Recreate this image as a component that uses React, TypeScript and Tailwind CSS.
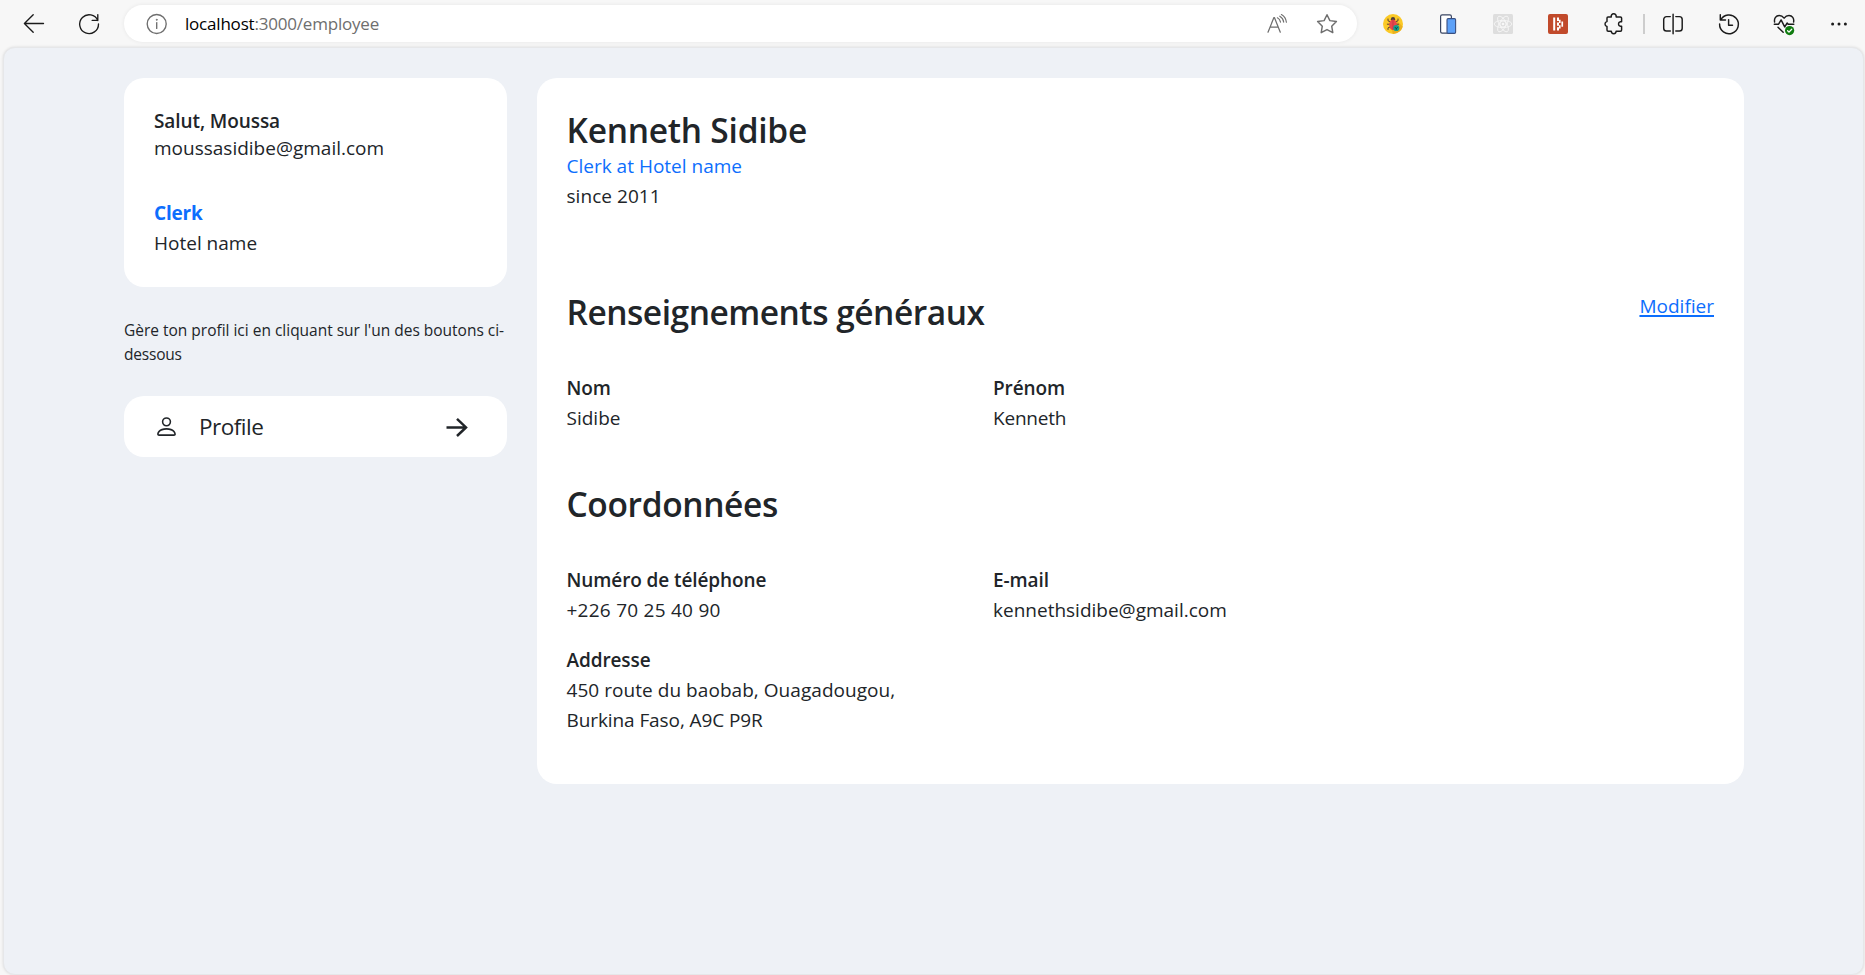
import React from "react";
import { BsPerson } from "react-icons/bs";

const line = {
  fill: "none",
  stroke: "currentColor",
  strokeWidth: 1.35,
  strokeLinecap: "round" as const,
  strokeLinejoin: "round" as const,
};

function Icon({ children, className = "" }: { children: React.ReactNode; className?: string }) {
  return (
    <svg width="24" height="24" viewBox="0 0 24 24" className={`shrink-0 ${className}`} {...line}>
      {children}
    </svg>
  );
}

function BrowserBar() {
  return (
    <header className="flex h-[47px] shrink-0 items-center bg-[#f7f7f7] text-[#1b1b1b]">
      <Icon className="ml-[22px]">
        <path d="M21.5 11.5H2.5M11.2 2.8 2.4 11.5l8.8 8.7" />
      </Icon>
      <Icon className="ml-[31px]">
        <path d="M20.8 8.6A9.4 9.4 0 1 0 21.5 12M20.8 2.6v5.8h-5.6" />
      </Icon>

      <div className="ml-[23px] flex h-[37px] w-[1233px] items-center rounded-full bg-white text-[#6e6e6e] shadow-[0_0_4px_rgba(0,0,0,0.07)]">
        <Icon className="ml-[21px]">
          <circle cx="11.7" cy="12" r="9.5" />
          <path d="M11.7 10.6v5.8" />
          <circle cx="11.7" cy="7.8" r="0.5" fill="currentColor" strokeWidth="0.8" />
        </Icon>
        <div className="ml-[16px] flex-1 whitespace-nowrap text-[17px] leading-[24px] tracking-[-0.2px]">
          <span className="text-black">localhost</span>:3000/employee
        </div>
        <Icon className="mr-[26px]">
          <path d="M3 20.2 8.9 5.6h.5l5.9 14.6M5 15.2h8.3" strokeWidth="1.25" />
          <path d="M12.4 5.8c1.8.9 2.8 2.4 3.1 4.4M14.8 4.2c2.2 1.2 3.5 3.2 3.9 6M16.4 2.6c2.9 1.6 4.6 4.2 5 7.6" strokeWidth="1.15" />
        </Icon>
        <Icon className="mr-[18px]">
          <path d="m12 2.7 2.9 5.9 6.5.95-4.7 4.6 1.1 6.5L12 17.6l-5.8 3.05 1.1-6.5-4.7-4.6 6.5-.95z" strokeWidth="1.45" />
        </Icon>
      </div>

      <svg width="20" height="20" viewBox="0 0 20 20" className="ml-[26px] shrink-0">
        <circle cx="10" cy="10" r="10" fill="#fbc926" />
        <path d="M10 20a10 10 0 0 0 9.7-7.6L13 6 9 16.5z" fill="#eab01e" />
        <g stroke="#5b4034" strokeWidth="1" fill="none" strokeLinecap="round">
          <path d="M7 7.6 5 6.8V5M13 7.6l2-.8V5M6.6 10.2H4.3M13.4 10.2h2.3M7 13l-2 .9v1.6M13 13l2 .9" />
        </g>
        <circle cx="10" cy="5.2" r="2.1" fill="#4b3c3a" />
        <ellipse cx="10" cy="10.7" rx="3.8" ry="5.2" fill="#e8474d" />
        <path d="M10 6v9.6" stroke="#b93440" strokeWidth="0.7" />
        <circle cx="13.3" cy="14" r="3.1" fill="#12a18c" />
        <path d="m12 13.2 1.3 1.5 1.3-1.5M13.3 14.5v1.2" stroke="#133f46" strokeWidth="1" fill="none" />
      </svg>
      <svg width="20" height="20" viewBox="0 0 20 20" className="ml-[35px] shrink-0">
        <rect x="2.6" y="0.8" width="10.8" height="18.4" rx="1.6" fill="#fff" stroke="#3a4562" strokeWidth="1.2" />
        <rect x="9" y="4.6" width="8.6" height="14.8" rx="1.2" fill="#5da1f8" stroke="#3a4f80" strokeWidth="1.1" />
      </svg>
      <svg width="20" height="20" viewBox="0 0 20 20" className="ml-[35px] shrink-0">
        <rect width="20" height="20" rx="1.5" fill="#dedede" />
        <g fill="none" stroke="#f8f8f8" strokeWidth="0.8">
          <circle cx="10" cy="10" r="3" />
          <ellipse cx="10" cy="10" rx="8.8" ry="3.6" />
          <ellipse cx="10" cy="10" rx="8.8" ry="3.6" transform="rotate(60 10 10)" />
          <ellipse cx="10" cy="10" rx="8.8" ry="3.6" transform="rotate(120 10 10)" />
        </g>
        <circle cx="10" cy="10" r="1.3" fill="#f8f8f8" />
      </svg>
      <svg width="20" height="20" viewBox="0 0 20 20" className="ml-[35px] shrink-0">
        <rect width="20" height="20" rx="2" fill="#c14a2b" />
        <path d="M5.2 3.4h2v13.2h-2zM9 3.4h2V7H9zM9 8.4h2v3.4H9zM9 13.2h2v3.4H9zM11 5.8h1.6v3.2H11zM11 11.2h1.6v3.2H11zM13.4 7.4h1.7v5.4h-1.7z" fill="#fff" />
      </svg>
      <Icon className="ml-[34px]">
        <path
          d="M6 4.9h3.3a2.5 2.5 0 1 1 4.8 0H18.4c.7 0 1.2.5 1.2 1.2V9.8h-1.3a2.3 2.3 0 0 0 0 4.5h1.3v3.8c0 .7-.5 1.2-1.2 1.2h-4.3a2.4 2.4 0 0 1-4.8 0H6.2c-.7 0-1.2-.5-1.2-1.2v-3.6a2.5 2.5 0 0 1 0-4.9V6.1c0-.7.4-1.2 1-1.2z"
          strokeWidth="1.45"
        />
      </Icon>
      <div className="ml-[17px] h-5 w-[2px] shrink-0 bg-[#cdcdcd]" />
      <Icon className="ml-[16px]">
        <path d="M9.3 4.6H5.5a2.8 2.8 0 0 0-2.8 2.8v8.9a2.8 2.8 0 0 0 2.8 2.8h3.8M14.8 4.6h3.6a2.8 2.8 0 0 1 2.8 2.8v8.9a2.8 2.8 0 0 1-2.8 2.8h-3.6M12.1 2.3v19.4" strokeWidth="1.45" />
      </Icon>
      <Icon className="ml-[32px]">
        <path d="M3.7 7.9A9.4 9.4 0 1 1 2.6 12M3.3 2.7v5.2h5.2M11.6 7.6v5.6h3.9" strokeWidth="1.45" />
      </Icon>
      <Icon className="ml-[31px]">
        <path d="M2.6 10C1.9 6.4 4 3.4 7.2 3.4c2 0 3.6 1 4.9 2.8 1.3-1.8 2.9-2.8 4.9-2.8 3.2 0 5.3 3 4.6 6.6M2.3 12.2h4.3l2.5-4.3 3.6 7 2.5-3.9 1 1.2h5.6M6 15.2l5.2 5" strokeWidth="1.45" />
        <circle cx="17.6" cy="18.6" r="4.6" fill="#107c10" stroke="none" />
        <path d="m15.6 18.7 1.4 1.4 2.7-2.8" stroke="#fff" strokeWidth="1.3" />
      </Icon>
      <svg width="20" height="4" viewBox="0 0 20 4" className="ml-[34px] shrink-0" fill="currentColor">
        <circle cx="2.6" cy="2" r="1.5" />
        <circle cx="9" cy="2" r="1.5" />
        <circle cx="15.4" cy="2" r="1.5" />
      </svg>
    </header>
  );
}

function Field({ label, children, className = "" }: { label: string; children: React.ReactNode; className?: string }) {
  return (
    <div className={`w-[426.5px] ${className}`}>
      <div className="font-semibold tracking-[-0.1px]">{label}</div>
      {children}
    </div>
  );
}

function Sidebar() {
  return (
    <aside className="w-[383px] shrink-0">
      <section className="h-[209px] rounded-[20px] bg-white px-[30px] pt-[31px]">
        <h6 className="leading-[24px] font-semibold tracking-[-0.09px]">Salut, Moussa</h6>
        <p>moussasidibe@gmail.com</p>
        <p className="mt-[35px] font-bold tracking-[-0.19px] text-[#0d6efd]">Clerk</p>
        <p>Hotel name</p>
      </section>
      <p className="mt-[31px] text-[15.5px] leading-[24px] whitespace-nowrap">
        <span className="tracking-[-0.01px]">Gère ton profil ici en cliquant sur l'un des boutons ci-</span>
        <br />
        <span className="tracking-[-0.2px]">dessous</span>
      </p>
      <button className="mt-[30px] flex h-[61px] w-full items-center rounded-[20px] bg-white pl-[30px]">
        <BsPerson size={25} />
        <span className="ml-[20px] flex-1 text-left text-[22.5px] leading-[34px] tracking-[-0.5px]">Profile</span>
        <svg width="22" height="20" viewBox="0 0 22 20" className="mr-[39px]" fill="none" stroke="currentColor" strokeWidth="2.5">
          <path d="M0.5 10.4h19.6M11 1.8l9 8.6-9 8.6" />
        </svg>
      </button>
    </aside>
  );
}

function Profile() {
  return (
    <main className="h-[706px] w-[1207px] shrink-0 rounded-[20px] bg-white pt-[31px] pr-[30px] pl-[29.5px]">
      <h1 className="text-[33.5px] leading-[42px] font-semibold tracking-[-0.24px]">Kenneth Sidibe</h1>
      <p className="text-[#0d6efd]">Clerk at Hotel name</p>
      <p className="tracking-[0.05px]">since 2011</p>

      <div className="mt-[80px] flex items-start justify-between">
        <h2 className="text-[33.5px] leading-[42px] font-semibold tracking-[-0.48px]">Renseignements généraux</h2>
        <a className="text-[#0d6efd] underline decoration-2 underline-offset-2">Modifier</a>
      </div>
      <div className="mt-[40px] flex">
        <Field label="Nom">Sidibe</Field>
        <Field label="Prénom">
          <span className="tracking-[-0.2px]">Kenneth</span>
        </Field>
      </div>

      <h2 className="mt-[50px] text-[33.5px] leading-[42px] font-semibold tracking-[-0.36px]">Coordonnées</h2>
      <div className="mt-[40px] flex">
        <Field label="Numéro de téléphone">
          <span className="tracking-[0.25px]">+226 70 25 40 90</span>
        </Field>
        <Field label="E-mail">kennethsidibe@gmail.com</Field>
      </div>
      <Field label="Addresse" className="mt-[20px]">
        <div className="tracking-[0.05px]">450 route du baobab, Ouagadougou,</div>
        <div className="tracking-[-0.09px]">Burkina Faso, A9C P9R</div>
      </Field>
    </main>
  );
}

export default function App() {
  return (
    <div className="flex h-[975px] w-[1865px] flex-col overflow-hidden bg-[#f7f7f7] font-['Open_Sans',sans-serif] text-[19px] leading-[30px] text-[#212529]">
      <BrowserBar />
      <div className="mr-px ml-[3px] flex flex-1 items-start gap-[30px] rounded-[12px] border border-[#e6e7e9] bg-[#eef1f6] pt-[30px] pl-[120px] shadow-[0_0_3px_rgba(0,0,0,0.12)]">
        <Sidebar />
        <Profile />
      </div>
    </div>
  );
}
